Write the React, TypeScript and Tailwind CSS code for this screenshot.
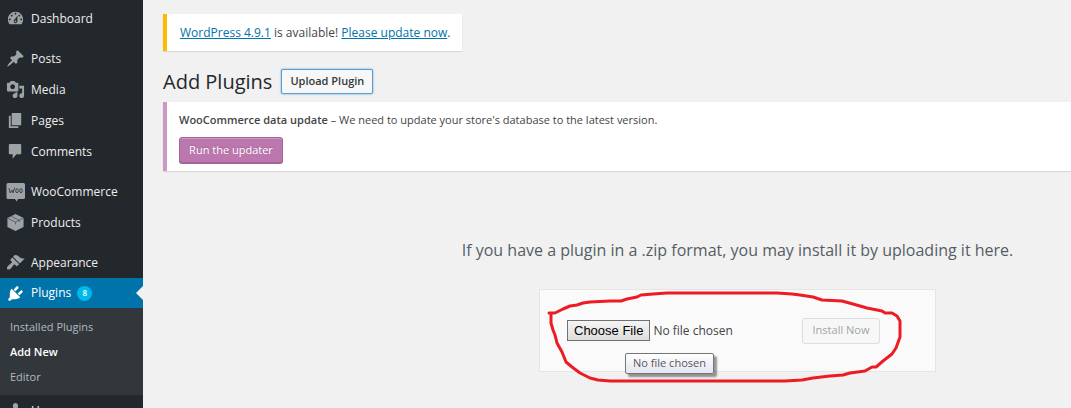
import React from 'react';
import clsx from 'clsx';

type MenuItem = {
  label: string;
  icon: React.ReactNode;
  badge?: number;
  current?: boolean;
  children?: { label: string; current?: boolean }[];
};

function Icon({ d }: { d: string }) {
  return (
    <svg viewBox="0 0 20 20" className="size-[19px]" fill="currentColor" fillRule="evenodd" aria-hidden="true">
      <path d={d} />
    </svg>
  );
}

function WooIcon() {
  return (
    <svg viewBox="0 0 20 20" className="size-5" aria-hidden="true">
      <path fill="currentColor" d="M2 1h15.500a1.500 1.500 0 0 1 1.500 1.500v13a1.500 1.500 0 0 1-1.500 1.500H12l-1.500 2.500L9 17H2a1.500 1.500 0 0 1-1.500-1.500v-13A1.500 1.500 0 0 1 2 1z" />
      <path
        fill="none"
        stroke="#3f444a"
        strokeWidth="1"
        strokeLinecap="round"
        strokeLinejoin="round"
        d="M3 6.500l1.200 4.500L6 8l1 3 1.500-5"
      />
      <ellipse cx="11" cy="8.700" rx="1.300" ry="2" fill="none" stroke="#3f444a" />
      <ellipse cx="15" cy="8.700" rx="1.300" ry="2" fill="none" stroke="#3f444a" />
    </svg>
  );
}

function BoxIcon() {
  return (
    <svg viewBox="0 0 20 20" className="size-[19px]" aria-hidden="true">
      <path fill="currentColor" d="M10 1l8.500 4.200v9.600L10 19l-8.500-4.200V5.200z" />
      <path fill="none" stroke="#3f444a" strokeWidth="0.700" d="M1.500 5.400L10 9.600l8.500-4.200M10 9.600V12M5.500 3.500L14 7.600v2" />
    </svg>
  );
}

const groups: MenuItem[][] = [
  [
    {
      label: 'Dashboard',
      icon: <Icon d="M3.760 16h12.480c1.100-1.370 1.760-3.110 1.760-5 0-4.420-3.580-8-8-8s-8 3.580-8 8c0 1.890.660 3.630 1.760 5zM10 4c.550 0 1 .450 1 1s-.450 1-1 1-1-.450-1-1 .450-1 1-1zM6 6c.550 0 1 .450 1 1s-.450 1-1 1-1-.450-1-1 .450-1 1-1zm8 0c.550 0 1 .450 1 1s-.450 1-1 1-1-.450-1-1 .450-1 1-1zm-5.370 5.550L12 7v6c0 1.100-.900 2-2 2s-2-.900-2-2c0-.570.240-1.080.630-1.450zM4 10c.550 0 1 .450 1 1s-.450 1-1 1-1-.450-1-1 .450-1 1-1zm12 0c.550 0 1 .450 1 1s-.450 1-1 1-1-.450-1-1 .450-1 1-1zm-5 3c0-.550-.450-1-1-1s-1 .450-1 1 .450 1 1 1 1-.450 1-1z" />,
    },
  ],
  [
    {
      label: 'Posts',
      icon: <Icon d="M10.440 3.020l1.820-1.820 6.360 6.350-1.830 1.820c-1.050-.680-2.480-.570-3.410.360l-.750.750c-.920.930-1.040 2.350-.350 3.410l-1.830 1.820-2.410-2.410-2.800 2.790c-.420.420-3.380 2.710-3.800 2.290s1.860-3.390 2.280-3.810l2.790-2.790L4.100 9.360l1.830-1.820c1.050.690 2.480.570 3.400-.360l.750-.750c.930-.920 1.050-2.350.360-3.410z" />,
    },
    {
      label: 'Media',
      icon: <Icon d="M13 11V4c0-.550-.450-1-1-1h-1.670L9 1H5L3.670 3H2c-.550 0-1 .450-1 1v7c0 .550.450 1 1 1h10c.550 0 1-.450 1-1zM7 4.500c1.380 0 2.500 1.120 2.500 2.500S8.380 9.500 7 9.500 4.500 8.380 4.500 7 5.620 4.500 7 4.500zM14 6h5v10.500c0 1.380-1.120 2.500-2.500 2.500S14 17.880 14 16.500s1.120-2.500 2.500-2.500c.170 0 .340.020.500.050V9h-3V6zm-4 8.050V13h2v3.500c0 1.380-1.120 2.500-2.500 2.500S7 17.880 7 16.500 8.120 14 9.500 14c.170 0 .340.020.500.050z" />,
    },
    { label: 'Pages', icon: <Icon d="M6 15V2h10v13H6zm-1 1h8v2H3V5h2v11z" /> },
    {
      label: 'Comments',
      icon: <Icon d="M4 2h11c.600 0 1 .400 1 1v9c0 .600-.400 1-1 1h-4l-4 4.500V13H4c-.600 0-1-.400-1-1V3c0-.600.400-1 1-1z" />,
    },
  ],
  [
    { label: 'WooCommerce', icon: <WooIcon /> },
    { label: 'Products', icon: <BoxIcon /> },
  ],
  [
    {
      label: 'Appearance',
      icon: <Icon d="M14.480 11.060L7.410 3.990l1.500-1.500c.500-.560 2.300-.470 3.510.320 1.210.800 1.430 1.280 2.910 2.100 1.180.640 2.450 1.260 4.450.850zm-.710.710L6.700 4.700 4.930 6.470c-.390.390-.390 1.020 0 1.410l1.060 1.060c.390.390.390 1.030 0 1.420-.600.600-1.430 1.110-2.210 1.690-.350.260-.700.530-1.010.840C1.430 14.230.400 16.080 1.400 17.070c.990 1 2.840-.030 4.180-1.360.310-.310.580-.660.850-1.020.570-.780 1.080-1.610 1.690-2.210.390-.390 1.020-.390 1.410 0l1.060 1.060c.390.390 1.020.390 1.410 0z" />,
    },
    {
      label: 'Plugins',
      badge: 8,
      current: true,
      icon: <Icon d="M13.110 4.360L9.870 7.600 8 5.730l3.240-3.240c.350-.340 1.050-.200 1.560.320.520.510.660 1.210.310 1.550zm-8 1.770l.910-1.120 9.010 9.010-1.190.840c-.710.710-2.630 1.160-3.820 1.160H6.140L4.900 17.260c-.590.590-1.540.590-2.120 0-.590-.580-.590-1.530 0-2.120l1.240-1.240v-3.880c0-1.130.400-3.190 1.090-3.890zm7.260 3.970l3.240-3.240c.340-.350 1.040-.210 1.550.310.520.510.660 1.210.310 1.550l-3.240 3.250z" />,
      children: [{ label: 'Installed Plugins' }, { label: 'Add New', current: true }, { label: 'Editor' }],
    },
    {
      label: 'Users',
      icon: <Icon d="M10 9.250c-2.270 0-2.730-3.440-2.730-3.440C7 4.020 7.820 2 9.970 2c2.160 0 2.980 2.020 2.710 3.810 0 0-.410 3.440-2.680 3.440zm0 2.570L12.720 10c2.390 0 4.520 2.330 4.520 4.530v2.490s-3.650 1.130-7.240 1.130c-3.650 0-7.240-1.130-7.240-1.130v-2.490c0-2.250 1.940-4.480 4.470-4.480z" />,
    },
  ],
];

function Sidebar() {
  return (
    <nav className="flex w-[143px] shrink-0 flex-col gap-[9px] bg-[#23282d] pt-[3px]">
      {groups.map((items) => (
        <ul key={items[0].label}>
          {items.map((item) => (
            <li key={item.label}>
              <a
                href="#"
                className={clsx(
                  'relative flex items-center text-[12px] text-[#eeeeee]',
                  item.current ? 'h-[30px] bg-[#0073aa] text-white' : 'h-[31px]'
                )}
              >
                <span
                  className={clsx(
                    'flex w-[31px] shrink-0 justify-center',
                    item.current ? 'text-white' : 'text-[#9ea3a8]'
                  )}
                >
                  {item.icon}
                </span>
                {item.label}
                {item.badge && (
                  <span className="ml-[6px] flex size-[15px] items-center justify-center rounded-full bg-[#00b9eb] text-[8px] font-semibold">
                    {item.badge}
                  </span>
                )}
                {item.current && (
                  <span className="absolute right-0 border-y-[7px] border-r-[7px] border-y-transparent border-r-[#f1f1f1]" />
                )}
              </a>
              {item.children && (
                <ul className="bg-[#32373c] pt-[7px] pb-[5px]">
                  {item.children.map((sub) => (
                    <li key={sub.label}>
                      <a
                        href="#"
                        className={clsx(
                          'flex h-[25px] items-center pl-[10px] text-[11px]',
                          sub.current ? 'font-semibold text-white' : 'text-[#b4b9be]'
                        )}
                      >
                        {sub.label}
                      </a>
                    </li>
                  ))}
                </ul>
              )}
            </li>
          ))}
        </ul>
      ))}
    </nav>
  );
}

function UploadForm() {
  return (
    <section className="flex min-w-[1149px] flex-col items-center pt-[67px]">
      <p className="text-[16px] leading-6 text-[#555d66]">
        If you have a plugin in a .zip format, you may install it by uploading it here.
      </p>
      <form className="relative mt-[27px] flex h-[83px] w-[397px] items-center justify-between border border-[#e5e5e5] bg-[#fafafa] pr-[55px] pl-[27px]">
        <input
          type="file"
          aria-label="Plugin zip file"
          className="w-[200px] text-[12px] text-[#444444] file:mr-[3px] file:h-[21px] file:border file:border-solid file:border-[#707070] file:bg-linear-to-b file:from-[#f4f4f4] file:to-[#dddddd] file:px-[6px] file:font-['Liberation_Sans',sans-serif] file:text-[13px] file:text-black"
        />
        <button
          type="submit"
          disabled
          className="h-[26px] w-[78px] rounded-[3px] border border-[#dddddd] bg-[#f7f7f7] text-[11px] text-[#a0a5aa]"
        >
          Install Now
        </button>
        <span
          role="tooltip"
          className="absolute top-[63px] left-[85px] flex h-[21px] w-[89px] items-center justify-center rounded-[2px] border border-[#767676] bg-linear-to-b from-white to-[#e4e5f0] text-[11px] text-[#575757] shadow-[3px_3px_2px_rgba(0,0,0,0.4)]"
        >
          No file chosen
        </span>
        {/* hand drawn circle around the form controls */}
        <svg
          viewBox="0 0 397 100"
          className="pointer-events-none absolute -top-px -left-px h-[100px] w-[397px] overflow-visible"
          fill="none"
          stroke="#ed1c24"
          strokeWidth="3"
          strokeLinejoin="round"
          strokeLinecap="round"
          aria-hidden="true"
        >
          <path d="M10 24L16 24L24 20L31 17L38 16L44 14L51 13L71 12L82 12L88 10L98 8L102 6L114 5L128 4L238 4L253 5L261 6L274 8L283 11L303 12L314 15L328 19L343 22L346 24L353 24L358 27L361 32L361 48L357 59L353 65L344 72L337 78L333 78L326 82L311 84L304 86L291 87L274 89L263 91L246 92L71 92L59 91L51 89L41 84L33 78L27 73L23 63L18 54L16 46L14 41L12 34L12 24" />
        </svg>
      </form>
    </section>
  );
}

export default function App() {
  return (
    <div className="flex h-screen overflow-hidden bg-[#f1f1f1] font-['Open_Sans','Noto_Sans',sans-serif] text-[12px] text-[#444444]">
      <Sidebar />
      <main className="min-w-0 flex-1 overflow-hidden pt-[14px] pl-5">
        <div className="flex h-[37px] w-fit items-center border-l-4 border-[#ffb900] bg-white pr-3 pl-[13px] shadow-[0_1px_1px_rgba(0,0,0,0.1)]">
          <p>
            <a href="#" className="text-[#0073aa] underline">WordPress 4.9.1</a> is available!{' '}
            <a href="#" className="text-[#0073aa] underline">Please update now</a>.
          </p>
        </div>

        <div className="mt-[18px] flex items-center gap-[9px]">
          <h1 className="text-[20px] leading-[25px] text-[#23282d]">Add Plugins</h1>
          <button
            type="button"
            className="h-[25px] w-[92px] rounded-[2px] border border-[#5b9dd9] bg-[#f7f7f7] text-[11px] font-semibold whitespace-nowrap text-[#32373c] shadow-[0_0_2px_rgba(30,140,190,0.8)]"
          >
            Upload Plugin
          </button>
        </div>

        <div className="mt-2 border-l-4 border-[#cc99c2] bg-white pt-[9px] pb-2 pl-3 text-[11px] shadow-[0_1px_1px_rgba(0,0,0,0.1)]">
          <p className="leading-[18px]">
            <strong className="font-semibold">WooCommerce data update</strong> – We need to update your store's database to the latest version.
          </p>
          <button
            type="button"
            className="mt-2 block h-[26px] w-[104px] rounded-[3px] border border-[#a36597] bg-[#bb77ae] text-white shadow-[inset_0_1px_0_rgba(255,255,255,0.25),0_1px_0_#a36597] [text-shadow:0_-1px_1px_#a36597]"
          >
            Run the updater
          </button>
        </div>

        <UploadForm />
      </main>
    </div>
  );
}
